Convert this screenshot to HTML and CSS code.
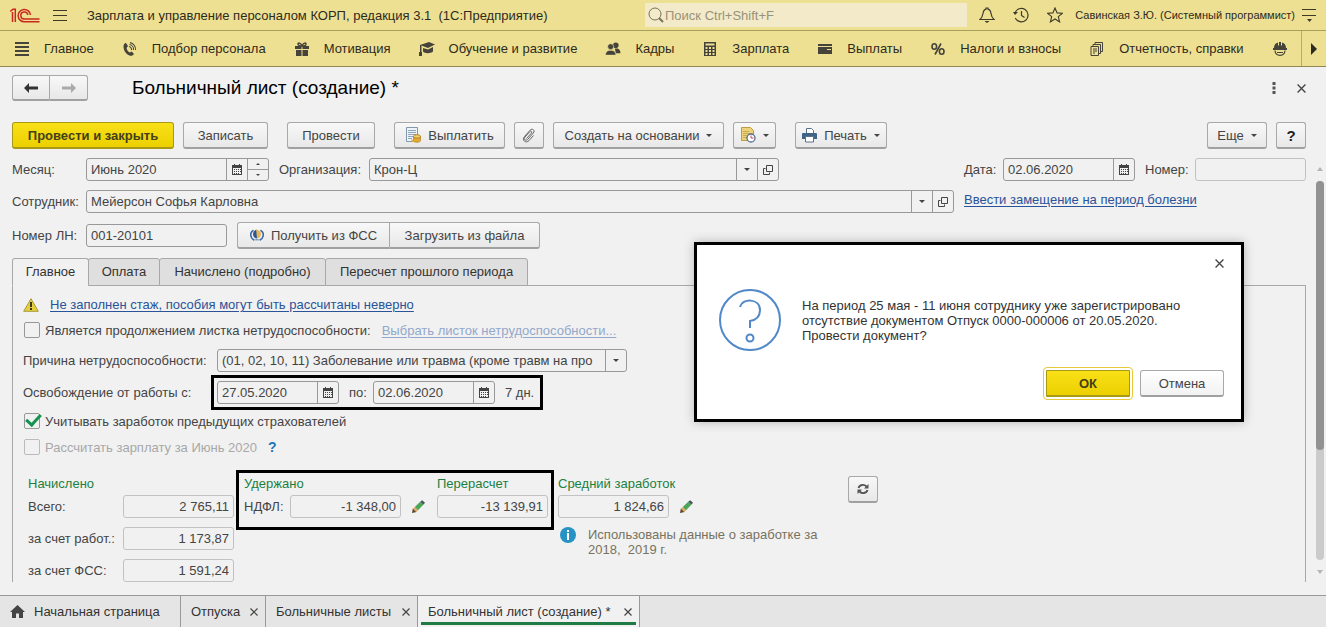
FILE: index.html
```html
<!DOCTYPE html>
<html lang="ru">
<head>
<meta charset="utf-8">
<title>Больничный лист (создание)</title>
<link rel="stylesheet" href="styles.css">
</head>
<body>
<svg class="defs" aria-hidden="true">
  <symbol id="calendar" viewBox="0 0 10 11"><path d="M0 1h10v10H0z"/><path d="M2 0h1v2H2zM7 0h1v2H7z"/><path d="M1 4h8v6H1z" fill="#f1f1f1"/><path d="M2 5h1v1H2zM4 5h1v1H4zM6 5h1v1H6zM2 7h1v1H2zM4 7h1v1H4zM6 7h1v1H6zM8 5h1v1H8zM8 7h1v1H8zM2 9h1v1H2zM4 9h1v1H4zM6 9h1v1H6z"/></symbol>
  <symbol id="caret" viewBox="0 0 6 3"><path d="M0 0h6L3 3z"/></symbol>
  <symbol id="open" viewBox="0 0 10 10"><path d="M3.500.5h6v6h-6zM2.500 3.500h-2v6h6v-2" fill="none" stroke="#444"/></symbol>
  <symbol id="cross" viewBox="0 0 8 8"><path d="M.5.5l7 7M7.500.5l-7 7" fill="none" stroke="#444" stroke-width="1.200"/></symbol>
  <symbol id="pencil" viewBox="0 0 14 14"><path d="M0 14l1-5 4 4z" fill="#5a4630"/><path d="M1 9.500L3 7.500l3.500 3.500L4.500 13z" fill="#e0a860"/><path d="M3 7.500L8.800 2l3.400 3.200L6.500 11z" fill="#4ba657"/><path d="M8.800 2L11 .2 14 3l-1.800 2.200z" fill="#4a5560"/></symbol>
</svg>
<div class="app">
  <header class="titlebar">
    <svg class="logo" viewBox="0 0 30 15" aria-label="1С"><g fill="none" stroke="#c8281e" stroke-width="1.500"><path d="M.3 3.500L3 1.200h2.300V14M2.500 4v10"/><path d="M20.500 7A6.200 6.200 0 1 0 14.500 13.800H29.500"/><path d="M17.800 7a3.500 3.500 0 1 0-3.300 4H29.500"/></g></svg>
    <button class="plain" aria-label="Меню"><svg width="14" height="11" viewBox="0 0 14 11"><path d="M0 .5h14M0 5.500h14M0 10.500h14" stroke="#3d3a28"/></svg></button>
    <span class="app-name">Зарплата и управление персоналом КОРП, редакция 3.1&nbsp; (1С:Предприятие)</span>
    <label class="search"><svg width="16" height="16" viewBox="0 0 16 16"><circle cx="7" cy="7" r="6" fill="none" stroke="#77725a"/><path d="M11 11l4 4" stroke="#77725a" stroke-width="2"/></svg><input type="text" placeholder="Поиск Ctrl+Shift+F" aria-label="Поиск"></label>
    <div class="title-tools">
      <button class="plain" aria-label="Уведомления"><svg width="16" height="16" viewBox="0 0 16 16"><path d="M1 12.500c2-1.500 2.500-3 3-6C4.400 3.500 5.500 2.500 7 2.200V1h2v1.200c1.500.3 2.600 1.300 3 4.300.5 3 1 4.500 3 6z" fill="none" stroke="#3d3a28" stroke-width="1.200"/><path d="M5.500 14h5L8 16z" fill="#3d3a28"/></svg></button>
      <button class="plain" aria-label="История"><svg width="16" height="16" viewBox="0 0 16 16"><path d="M2 6a6.700 6.700 0 1 1 .3 5M8.500 4v4.500l3 2" fill="none" stroke="#3d3a28" stroke-width="1.200"/><path d="M0 5h5L2 8z" fill="#3d3a28"/></svg></button>
      <button class="plain" aria-label="Избранное"><svg width="16" height="16" viewBox="0 0 16 16"><path d="M8 1l2.100 4.900 5.200.4-4 3.400 1.300 5.200L8 12l-4.600 2.900 1.300-5.200-4-3.400 5.200-.4z" fill="none" stroke="#3d3a28" stroke-width="1.100"/></svg></button>
    </div>
    <span class="user">Савинская З.Ю. (Системный программист)</span>
    <button class="plain" aria-label="Настройки"><svg width="14" height="13" viewBox="0 0 14 13"><path d="M0 .5h14M0 6.500h14" stroke="#3d3a28"/><path d="M5 10h5l-2.500 3z" fill="#3d3a28"/></svg></button>
  </header>

  <nav class="sections">
    <div class="section-links">
      <a href="#"><svg viewBox="0 0 14 14"><path d="M0 0h14v2H0zM0 4h14v2H0zM0 8h14v2H0zM0 12h14v2H0z"/></svg>Главное</a>
      <a href="#"><svg viewBox="0 0 14 14"><path d="M3 1l2 3-1.500 2c.5 2 1.500 3.500 3.200 4.500l2-1L11 12c-1 1.500-2.300 2.200-4 1.700C3 12.500.5 8 .5 4.500.5 2.500 1.500 1.200 3 1z"/><path d="M6 4.500a3 3 0 0 1 2.500 3.500M6.500 2.500a5 5 0 0 1 4 5.500M7 .6a7 7 0 0 1 5.600 7.400" fill="none" stroke="#45433a" stroke-width="1.100"/></svg>Подбор персонала</a>
      <a href="#"><svg viewBox="0 0 14 14"><path d="M0 4h6.500v3H0zM7.500 4H14v3H7.500zM1 8h5.500v6H1zM7.500 8H13v6H7.500z"/><path d="M7 4C5 4 3 3.500 3 2s2.500-1.500 4 2c1.500-3.500 4-3.500 4-2s-2 2-4 2z" fill="none" stroke="#45433a" stroke-width="1.400"/></svg>Мотивация</a>
      <a href="#"><svg class="wide" viewBox="0 0 16 14"><path d="M1 3l9-3 6 2.500L9 6z"/><path d="M4 6l5 1.500L14 5v4.500C12 11.500 6 12 4 9.500zM1 3h1.500v7H1zM0 10h3v4H0z"/></svg>Обучение и развитие</a>
      <a href="#"><svg class="wide" viewBox="0 0 16 15"><circle cx="11" cy="3.500" r="3"/><path d="M10 7h3c2 1 3 2 3 5h-5z"/><circle cx="5.500" cy="5" r="3.200" stroke="#eee093" stroke-width=".7"/><path d="M0 14c0-3 1.500-4.500 4-5h3c2.500.5 4 2 4 5z" stroke="#eee093" stroke-width=".5"/></svg>Кадры</a>
      <a href="#"><svg viewBox="0 0 14 14"><path d="M1 0h12v14H1z"/><path d="M2.500 1.500h9v2h-9zM2.500 5h2v2h-2zM6 5h2v2H6zM9.500 5h2v2h-2zM2.500 8h2v2h-2zM6 8h2v2H6zM9.500 8h2v2h-2zM2.500 11h2v2h-2zM6 11h2v2H6zM9.500 11h2v2h-2z" fill="#eee093"/></svg>Зарплата</a>
      <a href="#"><svg viewBox="0 0 14 14"><path d="M0 2h14v2H0zM0 5h14v7H0z"/><path d="M9 7h4v1H9z" fill="#eee093"/></svg>Выплаты</a>
      <a href="#"><svg viewBox="0 0 14 14"><g fill="none" stroke="#45433a" stroke-width="1.600"><ellipse cx="3.300" cy="4.500" rx="2.300" ry="2.800"/><ellipse cx="10.700" cy="9.500" rx="2.300" ry="2.800"/><path d="M10 1.500L4 12.500"/></g></svg>Налоги и взносы</a>
      <a href="#"><svg viewBox="0 0 14 14"><path d="M1 4.500h7.500v9H1zM3 4V2.500h7.500v9H9M5 2V.5h7.500v9H11M3 7h4M3 9h4M3 11h2" fill="none" stroke="#45433a"/></svg>Отчетность, справки</a>
      <a href="#" aria-label="Охрана труда"><svg viewBox="0 0 14 14"><path d="M1 6c0-3 1.500-5 4-5.500v3h1V0h2v3.500h1v-3c2.500.5 4 2.500 4 5.500h1v2H0V6z"/><path d="M2 8.500c.5 6.500 9.500 6.500 10 0" fill="none" stroke="#45433a" stroke-width="1.200"/><path d="M4 10h6v1H4z"/></svg></a>
    </div>
    <button class="plain sections-next" aria-label="Далее"><svg width="6" height="12" viewBox="0 0 6 12"><path d="M0 0l6 6-6 6z" fill="#2d2b20"/></svg></button>
  </nav>

  <main class="document">
    <div class="doc-head">
      <div class="joined">
        <button class="btn history" aria-label="Назад"><svg width="14" height="10" viewBox="0 0 14 10"><path d="M0 5l5-5v3.500h9v3H5V10z" fill="#333"/></svg></button><button class="btn history" aria-label="Вперед"><svg width="14" height="10" viewBox="0 0 14 10"><path d="M14 5L9 0v3.500H0v3h9V10z" fill="#aaa"/></svg></button>
      </div>
      <h1>Больничный лист (создание) *</h1>
      <div class="doc-actions">
        <button class="plain" aria-label="Действия"><svg width="4" height="12" viewBox="0 0 4 12"><path d="M.5 0h3v3h-3zM.5 4.500h3v3h-3zM.5 9h3v3h-3z" fill="#555"/></svg></button>
        <button class="plain" aria-label="Закрыть"><svg width="9" height="9"><use href="#cross"/></svg></button>
      </div>
    </div>

    <div class="toolbar">
      <button class="btn primary post-close">Провести и закрыть</button>
      <button class="btn w85">Записать</button>
      <button class="btn w88 apart">Провести</button>
      <button class="btn w111 apart"><svg width="16" height="16" viewBox="0 0 16 16"><path d="M1.500.5h11v14h-11z" fill="#edf3f8" stroke="#7f98ac"/><path d="M3 3.500h8M3 5.500h8M3 7.500h8M3 9.500h5M3 11.500h4" stroke="#8ea6b8"/><ellipse cx="12" cy="9.500" rx="3.500" ry="1.800" fill="#f3cf6a" stroke="#b5862a"/><path d="M8.500 9.500v4c0 2.300 7 2.300 7 0v-4c0 2.300-7 2.300-7 0z" fill="#e2aa35" stroke="#b5862a" stroke-width=".8"/><path d="M6.500 12c1 1 2 1.200 3 1.200v2c-2 0-3-.7-3-1.200z" fill="#e2aa35"/></svg>Выплатить</button>
      <button class="btn w30" aria-label="Файлы"><svg width="14" height="15" viewBox="0 0 14 15"><path d="M4.500 10.500L9.500 5c1-1.300-.6-2.500-1.700-1.300L3 9c-1.800 2.200.6 4.400 2.600 2.500L11.300 5c2.200-2.600-.9-5.200-3.200-2.800L2.500 8.500c-3 3.600 1.200 7.500 4.600 4l4.400-5" fill="none" stroke="#666"/></svg></button>
      <button class="btn w171">Создать на основании<svg class="drop"><use href="#caret"/></svg></button>
      <button class="btn w42" aria-label="Напоминания"><svg width="16" height="16" viewBox="0 0 16 16"><path d="M1.500.5h9l3 3v10h-12z" fill="#edd27a" stroke="#bd9b43"/><path d="M3 4.500h6M3 6.500h8M3 8.500h4M3 10.500h4" stroke="#c8a951"/><circle cx="11" cy="11" r="4" fill="#fff" stroke="#566f96" stroke-width="1.300"/><path d="M11 8.500V11h2.500" fill="none" stroke="#c34b4b"/></svg><svg class="drop"><use href="#caret"/></svg></button>
      <button class="btn w92 apart"><svg width="15" height="15" viewBox="0 0 15 15"><path d="M4.500 5V.5h5l2 2V5" fill="#fff" stroke="#587089"/><path d="M1 5h13q1 0 1 1v5h-3V9H3v2H0V6q0-1 1-1z" fill="#416486"/><path d="M3.500 8.500h8v5.500h-8z" fill="#fff" stroke="#587089"/></svg>Печать<svg class="drop"><use href="#caret"/></svg></button>
      <button class="btn w60 push">Еще<svg class="drop"><use href="#caret"/></svg></button>
      <button class="btn w30 help" aria-label="Справка">?</button>
    </div>

    <div class="workspace">
      <div class="form">
        <div class="header-grid">
          <div class="line">
            <label class="lead" for="month">Месяц:</label>
            <div class="field w183"><input id="month" type="text" value="Июнь 2020"><button aria-label="Календарь"><svg class="cal"><use href="#calendar"/></svg></button><span class="spin"><button aria-label="Больше"><svg viewBox="0 0 4 2"><path d="M0 2h4L2 0z"/></svg></button><button aria-label="Меньше"><svg viewBox="0 0 4 2"><path d="M0 0h4L2 2z"/></svg></button></span></div>
            <label class="organization" for="org">Организация:</label>
            <div class="field w410"><input id="org" type="text" value="Крон-Ц"><button aria-label="Выбрать"><svg class="drop"><use href="#caret"/></svg></button><button aria-label="Открыть"><svg class="opn"><use href="#open"/></svg></button></div>
          </div>
          <div class="line">
            <label class="date-label" for="date">Дата:</label>
            <div class="field w132"><input id="date" type="text" value="02.06.2020"><button aria-label="Календарь"><svg class="cal"><use href="#calendar"/></svg></button></div>
            <label class="number-label" for="number">Номер:</label>
            <div class="field readonly grow"><input id="number" type="text" readonly></div>
          </div>
          <div class="line">
            <label class="lead" for="employee">Сотрудник:</label>
            <div class="field grow"><input id="employee" type="text" value="Мейерсон Софья Карловна"><button aria-label="Выбрать"><svg class="drop"><use href="#caret"/></svg></button><button aria-label="Открыть"><svg class="opn"><use href="#open"/></svg></button></div>
          </div>
          <div class="substitute"><a class="link" href="#">Ввести замещение на период болезни</a></div>
        </div>
        <div class="line sheet-line">
          <label class="lead" for="sheet">Номер ЛН:</label>
          <div class="field w141"><input id="sheet" type="text" value="001-20101"></div>
          <div class="joined sources">
            <button class="btn w153"><svg width="14" height="14" viewBox="0 0 16 14"><path d="M4 1.500C-.5 4-.5 10 5 13M12 1.500c4.500 2.500 4.500 8.500-1 11.500" fill="none" stroke="#3c6ca5" stroke-width="1.800"/><path d="M8 1a4.500 5 0 0 0 0 10z" fill="#2e568c"/><path d="M7 1a5 5 0 0 1 1 10z" fill="#e7b558"/><path d="M6 12.500h4" stroke="#3c6ca5"/></svg>Получить из ФСС</button><button class="btn w150">Загрузить из файла</button>
          </div>
        </div>

        <div class="tabs" role="tablist">
          <button class="tab active w77" role="tab" aria-selected="true">Главное</button>
          <button class="tab w72" role="tab">Оплата</button>
          <button class="tab w167" role="tab">Начислено (подробно)</button>
          <button class="tab w203" role="tab">Пересчет прошлого периода</button>
        </div>
        <section class="panel">
          <div class="warning"><svg width="16" height="14" viewBox="0 0 16 14"><path d="M8 .7l7.300 12.600H.7z" fill="#e6cf3c" stroke="#a89a3a"/><path d="M7 4h2v5H7zM7 10h2v2H7z" fill="#3d3a1c"/></svg><a class="link" href="#">Не заполнен стаж, пособия могут быть рассчитаны неверно</a></div>
          <div class="line continuation"><label class="check"><input type="checkbox">Является продолжением листка нетрудоспособности:</label><a class="link faded" href="#">Выбрать листок нетрудоспособности...</a></div>
          <div class="line reason-line">
            <label class="reason-label" for="reason">Причина нетрудоспособности:</label>
            <div class="field w410"><select id="reason"><option>(01, 02, 10, 11) Заболевание или травма (кроме травм на про</option></select><span class="cell"><svg class="drop"><use href="#caret"/></svg></span></div>
          </div>
          <div class="line period-line">
            <label class="reason-label" for="from">Освобождение от работы с:</label>
            <div class="period marked">
              <div class="field w122"><input id="from" type="text" value="27.05.2020"><button aria-label="Календарь"><svg class="cal"><use href="#calendar"/></svg></button></div>
              <label class="to-label" for="to">по:</label>
              <div class="field w122"><input id="to" type="text" value="02.06.2020"><button aria-label="Календарь"><svg class="cal"><use href="#calendar"/></svg></button></div>
              <span class="days">7 дн.</span>
            </div>
          </div>
          <label class="check previous"><input type="checkbox" checked>Учитывать заработок предыдущих страхователей</label>
          <div class="line recalc"><label class="check disabled"><input type="checkbox" disabled>Рассчитать зарплату за Июнь 2020</label><button class="plain hint" aria-label="Подсказка">?</button></div>

          <div class="totals">
            <div class="total-group accrued">
              <h2>Начислено</h2>
              <div class="line"><label for="t1">Всего:</label><div class="field readonly w111"><input id="t1" type="text" value="2 765,11" readonly></div></div>
              <div class="line"><label for="t2">за счет работ.:</label><div class="field readonly w111"><input id="t2" type="text" value="1 173,87" readonly></div></div>
              <div class="line"><label for="t3">за счет ФСС:</label><div class="field readonly w111"><input id="t3" type="text" value="1 591,24" readonly></div></div>
            </div>
            <div class="deductions marked">
              <div class="total-group withheld">
                <h2>Удержано</h2>
                <div class="line"><label for="t4">НДФЛ:</label><div class="field readonly w111"><input id="t4" type="text" value="-1 348,00" readonly></div><button class="plain edit" aria-label="Изменить"><svg width="13" height="13"><use href="#pencil"/></svg></button></div>
              </div>
              <div class="total-group">
                <h2>Перерасчет</h2>
                <div class="line"><div class="field readonly w111"><input type="text" value="-13 139,91" aria-label="Перерасчет" readonly></div></div>
              </div>
            </div>
            <div class="total-group average">
              <h2>Средний заработок</h2>
              <div class="line"><div class="field readonly w111"><input type="text" value="1 824,66" aria-label="Средний заработок" readonly></div><button class="plain edit" aria-label="Изменить"><svg width="13" height="13"><use href="#pencil"/></svg></button></div>
              <div class="note"><svg width="16" height="16" viewBox="0 0 16 16"><circle cx="8" cy="8" r="8" fill="#2793c4"/><path d="M7 3h2v2H7zM7 6h2v7H7z" fill="#fff"/></svg><p>Использованы данные о заработке за<br>2018,&nbsp; 2019 г.</p></div>
            </div>
            <button class="btn w30 refresh" aria-label="Обновить"><svg width="12" height="12" viewBox="0 0 12 12"><path d="M1.500 5C2.500 1.500 7 1 9.500 3.500M10.500 7C9.500 10.500 5 11 2.500 8.500" fill="none" stroke="#555" stroke-width="1.800"/><path d="M11.500 1v4.500H7zM.5 11V6.500H5z" fill="#555"/></svg></button>
          </div>
        </section>
      </div>
      <div class="scroll" aria-hidden="true">
        <svg width="6" height="4" viewBox="0 0 6 4"><path d="M0 4h6L3 0z" fill="#b5b5b5"/></svg>
        <div class="track"><div class="thumb"></div></div>
        <svg width="6" height="4" viewBox="0 0 6 4"><path d="M0 0h6L3 4z" fill="#b5b5b5"/></svg>
      </div>
    </div>
  </main>

  <footer class="windows">
    <button class="window home"><svg width="15" height="13" viewBox="0 0 15 13"><path d="M7.500 0L15 7h-2v6H9V8.500H6V13H2V7H0z" fill="#444"/></svg>Начальная страница</button>
    <button class="window w85">Отпуска<svg class="x"><use href="#cross"/></svg></button>
    <button class="window w152">Больничные листы<svg class="x"><use href="#cross"/></svg></button>
    <button class="window current w222">Больничный лист (создание) *<svg class="x"><use href="#cross"/></svg></button>
  </footer>

  <div class="dialog" role="dialog" aria-describedby="question">
    <button class="plain dialog-close" aria-label="Закрыть"><svg width="9" height="9"><use href="#cross"/></svg></button>
    <div class="dialog-body">
      <svg width="62" height="62" viewBox="0 0 62 62"><g fill="none" stroke="#5088c8" stroke-width="2"><circle cx="31" cy="31" r="30"/><path d="M21 18c2-9 20-9 20 3 0 7-4 10-10 11v7"/><circle cx="31" cy="49" r="3.500"/></g></svg>
      <p id="question">На период 25 мая - 11 июня сотруднику уже зарегистрировано<br>отсутствие документом Отпуск 0000-000006 от 20.05.2020.<br>Провести документ?</p>
    </div>
    <div class="dialog-buttons"><button class="btn primary ok">ОК</button><button class="btn cancel">Отмена</button></div>
  </div>
</div>
</body>
</html>
```
FILE: styles.css
```css
* { box-sizing: border-box; }
body {
  margin: 0;
  font: 13px/15px "Liberation Sans", Arial, sans-serif;
  color: #444;
  background: #f1f1f1;
}
button, input, select { font: inherit; color: inherit; margin: 0; }
svg { display: block; flex: none; fill: #444; }
h1, h2, p { margin: 0; font-weight: normal; }
.defs { position: absolute; width: 0; height: 0; }
.app { position: relative; display: flex; flex-direction: column; height: 100vh; overflow: hidden; white-space: nowrap; }
.plain { display: flex; align-items: center; justify-content: center; padding: 0; border: 0; background: none; }

.titlebar { display: flex; align-items: center; height: 31px; flex: none; padding: 0 10px; background: #eee093; border-bottom: 1px solid #a79f5c; color: #2d2b20; }
.logo { width: 30px; height: 15px; margin-right: 13px; }
.app-name { margin-left: 20px; width: 558px; }
.search { display: flex; align-items: center; flex: 1; height: 24px; padding-left: 3px; background: #f2eac9; }
.search input { flex: 1; min-width: 0; border: 0; background: none; padding: 0 1px; outline: 0; }
.search input::placeholder { color: #98927a; opacity: 1; }
.title-tools { display: flex; gap: 18px; margin: 0 12px; }
.user { font-size: 11px; margin-right: 7px; }

.sections { display: flex; align-items: center; height: 36px; flex: none; background: #eee093; border-bottom: 1px solid #91884f; }
.section-links { display: flex; align-items: center; flex: 1; min-width: 0; padding-left: 15px; gap: 29px; overflow: hidden; }
.section-links a { display: flex; align-items: center; gap: 15px; color: #2d2b20; text-decoration: none; }
.section-links svg { width: 14px; height: 14px; fill: #45433a; }
.section-links .wide { width: 16px; margin: 0 -1px; }
.sections-next { width: 25px; height: 35px; flex: none; border-left: 1px solid #b5ac6c; }

.document { display: flex; flex-direction: column; flex: 1; min-height: 0; padding: 8px 2px 13px 12px; }
.doc-head { display: flex; align-items: center; height: 26px; flex: none; }
.doc-head h1 { margin-left: 44px; font-size: 19px; line-height: 24px; color: #000; }
.doc-actions { display: flex; align-items: center; gap: 21px; margin-left: auto; padding-right: 18px; }
.joined { display: flex; }
.joined .btn + .btn { border-left: 0; border-radius: 0 3px 3px 0; }
.joined .btn:first-child { border-radius: 3px 0 0 3px; }

.btn { display: flex; align-items: center; justify-content: center; gap: 7px; height: 27px; flex: none; padding: 0; border: 1px solid #a8a8a8; border-bottom: 2px solid #a0a0a0; border-radius: 3px; background: linear-gradient(#f8f8f8, #e8e8e8); color: #444; }
.btn.history { width: 38px; height: 26px; }
.btn.primary { border-color: #a89a14; background: linear-gradient(#f8e018, #ecd000); color: #444018; font-weight: bold; }
.drop { width: 6px; height: 3px; }
.toolbar { display: flex; gap: 9px; margin: 21px 18px 0 0; }
.post-close { width: 162px; }
.apart { margin-left: 10px; }
.push { margin-left: auto; }
.help { font-size: 15px; font-weight: bold; color: #222; }
.w30 { width: 30px; }
.w42 { width: 43px; }
.w60 { width: 60px; }
.w72 { width: 72px; }
.w77 { width: 77px; }
.w85 { width: 85px; }
.w88 { width: 88px; }
.w92 { width: 92px; }
.w111 { width: 111px; }
.w122 { width: 122px; }
.w132 { width: 132px; }
.w141 { width: 141px; }
.w150 { width: 150px; }
.w152 { width: 152px; }
.w153 { width: 153px; }
.w167 { width: 167px; }
.w171 { width: 171px; }
.w183 { width: 183px; }
.w203 { width: 203px; }
.w222 { width: 222px; }
.w410 { width: 410px; }

.workspace { display: flex; flex: 1; min-height: 0; gap: 10px; margin-top: 9px; }
.form { display: flex; flex-direction: column; flex: 1; min-width: 0; min-height: 0; overflow: hidden; }
.header-grid { display: grid; grid-template-columns: 1fr 342px; gap: 9px 10px; }
.line { display: flex; align-items: center; }
.substitute { padding-top: 2px; }
.lead { width: 74px; flex: none; }
.organization { width: 90px; margin-left: 10px; }
.date-label { width: 39px; }
.number-label { width: 50px; margin-left: 10px; }
.field { display: flex; height: 23px; flex: none; border: 1px solid #999; border-radius: 3px; overflow: hidden; }
.field.grow { flex: 1; min-width: 0; }
.field input, .field select { flex: 1; min-width: 0; border: 0; background: none; padding: 0 4px; outline: 0; appearance: none; }
.field button, .cell { display: flex; align-items: center; justify-content: center; width: 21px; padding: 0; border: 0; border-left: 1px solid #999; background: none; }
.field.readonly { border-color: #c2c2c2; }
.field.readonly input { text-align: right; }
.cal { width: 10px; height: 11px; }
.opn { width: 10px; height: 10px; }
.spin { display: flex; flex-direction: column; width: 21px; border-left: 1px solid #999; }
.spin button { flex: 1; width: 20px; border-left: 0; }
.spin button + button { border-top: 1px solid #999; }
.spin svg { width: 4px; height: 2px; }
.link { color: #2a5399; text-decoration: underline; text-underline-offset: 2px; }
.link.faded { color: #92a8cc; }
.sheet-line { margin-top: 9px; }
.sources { margin-left: 10px; }

.tabs { display: flex; flex: none; margin-top: 9px; height: 28px; position: relative; }
.tab { padding: 0 0 2px; margin-right: -1px; border: 1px solid #a8a8a8; border-radius: 3px 3px 0 0; background: #dfdfdf; color: #333; }
.tab.active { background: #f1f1f1; border-bottom-color: #f1f1f1; }
.panel { display: flex; flex-direction: column; flex: 1; min-height: 0; margin-top: -1px; padding: 11px 10px 0; border: 1px solid #a8a8a8; border-bottom: 0; }
.warning { display: flex; align-items: center; gap: 11px; }
.continuation { margin-top: 10px; }
.continuation .link { margin-left: 11px; }
.check { display: flex; align-items: center; gap: 5px; height: 16px; }
.check input { appearance: none; position: relative; width: 16px; height: 16px; margin: 0 0 0 1px; border: 1px solid #999; border-radius: 2px; }
.check input:checked::after { content: ""; position: absolute; left: 4px; top: -3px; width: 6px; height: 12px; border: solid #159150; border-width: 0 3px 3px 0; transform: rotate(42deg); }
.check.disabled { color: #a8a8a8; }
.check.disabled input { border-color: #bbb; }
.reason-label { width: 194px; }
.reason-line { margin-top: 11px; }
.period-line { margin-top: 9px; }
.marked { position: relative; }
.marked::after { content: ""; position: absolute; inset: -6px; border: 3px solid #000; pointer-events: none; }
.period { display: flex; align-items: center; }
.to-label { width: 24px; margin-left: 10px; }
.days { width: 32px; margin-left: 10px; }
.previous { margin-top: 9px; }
.recalc { margin-top: 10px; }
.hint { margin-left: 11px; font-size: 14px; font-weight: bold; color: #2277b8; }

.totals { display: flex; align-items: flex-start; margin: 21px 0 0 5px; }
.total-group { display: flex; flex-direction: column; gap: 9px; }
.total-group h2 { margin-bottom: -5px; font-size: 13px; color: #1b7f42; }
.accrued label { width: 95px; }
.deductions { display: flex; margin-left: 10px; }
.deductions::after { inset: -6px -6px -12px -8px; }
.withheld { width: 193px; }
.withheld label { width: 46px; }
.edit { margin-left: 11px; }
.average { width: 265px; margin-left: 10px; }
.note { display: flex; gap: 12px; padding-left: 2px; color: #77735f; }
.refresh { margin-left: 25px; }

.scroll { display: flex; flex-direction: column; align-items: center; width: 8px; flex: none; padding: 9px 0 8px; }
.track { display: flex; flex: 1; width: 8px; margin: 10px 0; border-radius: 4px; background: #cbcbcb; }
.thumb { width: 8px; height: 71%; border-radius: 4px; background: #929292; }

.windows { display: flex; height: 32px; flex: none; border-top: 1px solid #999; background: #e5e5e5; }
.window { display: flex; align-items: center; justify-content: space-between; padding: 0 7px 0 10px; border: 0; border-right: 1px solid #999; background: none; color: #333; }
.window.home { width: 181px; justify-content: flex-start; gap: 9px; }
.window.current { position: relative; background: #f1f1f1; }
.window.current::after { content: ""; position: absolute; left: 3px; right: 3px; bottom: 2px; height: 3px; background: #1f7b45; }
.x { width: 8px; height: 8px; }

.dialog { position: absolute; top: 242px; right: 82px; width: 550px; padding: 14px 17px 22px 22px; border: 3px solid #000; background: #fff; color: #333; box-shadow: 0 0 10px rgba(0, 0, 0, .25); }
.dialog-close { margin-left: auto; width: 9px; height: 9px; }
.dialog-body { display: flex; align-items: center; gap: 21px; margin-top: 21px; }
.dialog-buttons { display: flex; justify-content: flex-end; gap: 10px; margin-top: 19px; }
.dialog-buttons .btn { width: 84px; }
.cancel { background: linear-gradient(#fff, #f2f2f2); }
.btn.ok { border-radius: 1px; outline: 1px solid #e8c83c; outline-offset: 2px; }
```
